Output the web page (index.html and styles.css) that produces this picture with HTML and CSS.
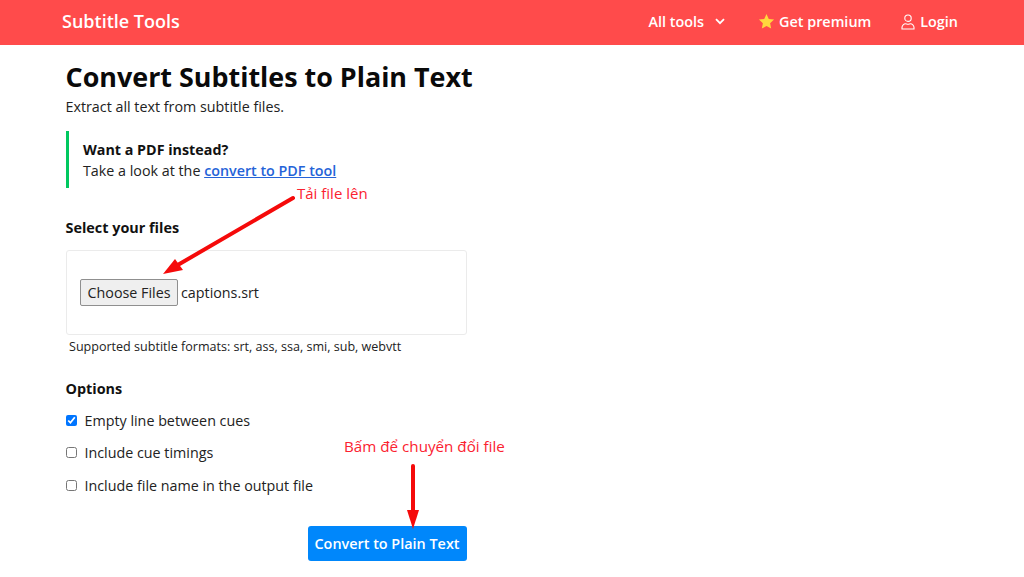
FILE: index.html
```html
<!DOCTYPE html>
<html lang="en">
<head>
  <meta charset="UTF-8" />
  <title>Convert Subtitles to Plain Text</title>
  <link rel="stylesheet" href="styles.css">
</head>
<body>
  <header>
    <a class="brand" href="#">Subtitle Tools</a>
    <nav>
      <a href="#" class="nav-tools">All tools
        <svg class="chevron" viewBox="0 0 10 7" width="10" height="7"><path d="M1 1.2l4 4 4-4" fill="none" stroke="#fff" stroke-width="1.8"/></svg>
      </a>
      <a href="#" class="nav-premium">
        <svg viewBox="0 0 24 24" width="17" height="17"><path d="M12 1.5l3.2 6.9 7.5.9-5.6 5.1 1.5 7.5L12 18.2l-6.600 3.700 1.500-7.500-5.600-5.100 7.500-.9z" fill="#ffd83d"/></svg>
        Get premium
      </a>
      <a href="#" class="nav-login">
        <svg viewBox="0 0 14 16" width="14" height="16"><circle cx="7" cy="4.2" r="3.2" fill="none" stroke="#fff" stroke-width="1.1"/><path d="M1 15h12v-1.5c0-2.2-2-3.7-3.5-3.7-.9 0-1.300.5-2.500.5s-1.600-.5-2.500-.5C3 9.800 1 11.300 1 13.500z" fill="none" stroke="#fff" stroke-width="1.1"/></svg>
        Login
      </a>
    </nav>
  </header>

  <main>
    <h1>Convert Subtitles to Plain Text</h1>
    <p class="lead">Extract all text from subtitle files.</p>

    <div class="notice">
      <strong>Want a PDF instead?</strong>
      <p>Take a look at the <a href="#">convert to PDF tool</a></p>
    </div>

    <h2 class="label-files">Select your files</h2>
    <div class="file-box">
      <button class="file-btn" type="button">Choose Files</button>
      <span class="file-name">captions.srt</span>
    </div>
    <p class="formats">Supported subtitle formats: srt, ass, ssa, smi, sub, webvtt</p>

    <h2 class="label-options">Options</h2>
    <label class="option"><input type="checkbox" checked> Empty line between cues</label>
    <label class="option"><input type="checkbox"> Include cue timings</label>
    <label class="option"><input type="checkbox"> Include file name in the output file</label>

    <div class="actions">
      <button class="convert" type="button">Convert to Plain Text</button>
    </div>
  </main>

  <!-- red notes drawn over the page -->
  <span class="note note-upload">Tải file lên</span>
  <span class="note note-convert">Bấm để chuyển đổi file</span>
  <svg class="arrows" viewBox="0 0 1024 577" width="1024" height="577">
    <path d="M293 198L176 266" stroke="#f50a0a" stroke-width="4" stroke-linecap="round" fill="none"/>
    <path d="M163 274L175 259 183 270z" fill="#f50a0a"/>
    <path d="M413 466V512" stroke="#f50a0a" stroke-width="4" stroke-linecap="round" fill="none"/>
    <path d="M413 529L407 510H419z" fill="#f50a0a"/>
  </svg>
</body>
</html>
```

FILE: styles.css
```css
* { margin: 0; padding: 0; box-sizing: border-box; }
body {
  font-family: 'Open Sans', sans-serif;
  font-size: 14.3px;
  color: #222;
  background: #fff;
  overflow: hidden;
}
header {
  height: 45px;
  background: #ff4b4b;
  display: flex;
  align-items: center;
  justify-content: space-between;
  padding: 0 66px 2px 62px;
}
header a {
  color: #fff;
  text-decoration: none;
  font-weight: 600;
}
.brand { font-size: 18px; margin-bottom: 2px; }
nav {
  display: flex;
  align-items: center;
  font-size: 14.4px;
}
nav a {
  display: flex;
  align-items: center;
}
.nav-tools { gap: 11px; margin-right: 33px; }
.nav-premium { gap: 4px; margin-right: 30px; }
.nav-login { gap: 5px; }

main {
  width: 401px;
  margin-left: 65.5px;
}
h1 {
  font-size: 26.9px;
  line-height: 35px;
  font-weight: 700;
  color: #0a0a0a;
  margin-top: 14px;
  white-space: nowrap;
}
.lead { line-height: 20px; margin-top: 3px; }
.notice {
  margin-top: 14px;
  height: 57px;
  border-left: 3px solid #00c85f;
  padding: 8px 0 0 14.5px;
  line-height: 21px;
}
.notice strong { display: block; color: #111; }
.notice a { color: #2563d8; font-weight: 600; }
h2 {
  font-size: 14.4px;
  font-weight: 700;
  line-height: 20px;
  color: #111;
}
.label-files { margin-top: 30px; }
.file-box {
  margin-top: 12px;
  height: 85px;
  border: 1px solid #ebebeb;
  border-radius: 3px;
  padding: 28px 13.5px 0;
  display: flex;
  align-items: flex-start;
}
.file-btn {
  font: inherit;
  height: 27px;
  width: 98px;
  color: #222;
  background: #efefef;
  border: 1px solid #8f8f8f;
  border-radius: 2px;
}
.file-name { margin-left: 3px; line-height: 27px; }
.formats {
  font-size: 12.55px;
  line-height: 17px;
  margin: 3px 0 0 3.5px;
}
.label-options { margin-top: 24px; }
.option {
  display: flex;
  align-items: center;
  gap: 8px;
  height: 20px;
  margin-bottom: 12.5px;
}
.label-options + .option { margin-top: 11px; }
.option input {
  width: 11px;
  height: 11px;
  margin: 0;
  accent-color: #0075ff;
}
.actions {
  display: flex;
  justify-content: flex-end;
  margin-top: 31px;
}
.convert {
  font: inherit;
  font-size: 14.4px;
  font-weight: 600;
  color: #fff;
  width: 159px;
  height: 35px;
  background: #0087fb;
  border: 0;
  border-radius: 3px;
}
.note {
  position: absolute;
  color: #fb2230;
  line-height: 20px;
}
.note-upload { left: 297px; top: 183px; font-size: 15px; }
.note-convert { left: 344px; top: 436px; font-size: 15.2px; }
.arrows {
  position: absolute;
  left: 0;
  top: 0;
  pointer-events: none;
}
```
